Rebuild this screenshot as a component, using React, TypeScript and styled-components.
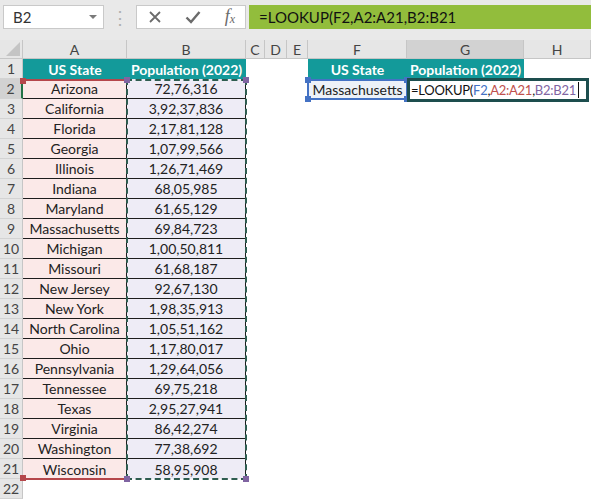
import React from "react";
import styled, { createGlobalStyle, css } from "styled-components";

const GlobalStyle = createGlobalStyle`
  * { box-sizing: border-box; }
  body {
    margin: 0;
    background: #ffffff;
    font-family: Lato, "Open Sans", sans-serif;
    overflow: hidden;
  }
`;

const states: [string, string][] = [
  ["Arizona", "72,76,316"],
  ["California", "3,92,37,836"],
  ["Florida", "2,17,81,128"],
  ["Georgia", "1,07,99,566"],
  ["Illinois", "1,26,71,469"],
  ["Indiana", "68,05,985"],
  ["Maryland", "61,65,129"],
  ["Massachusetts", "69,84,723"],
  ["Michigan", "1,00,50,811"],
  ["Missouri", "61,68,187"],
  ["New Jersey", "92,67,130"],
  ["New York", "1,98,35,913"],
  ["North Carolina", "1,05,51,162"],
  ["Ohio", "1,17,80,017"],
  ["Pennsylvania", "1,29,64,056"],
  ["Tennessee", "69,75,218"],
  ["Texas", "2,95,27,941"],
  ["Virginia", "86,42,274"],
  ["Washington", "77,38,692"],
  ["Wisconsin", "58,95,908"],
];

const columns = ["A", "B", "C", "D", "E", "F", "G", "H"];

export default function App() {
  return (
    <>
      <GlobalStyle />
      <Window>
        <Toolbar>
          <NameBox>
            <span>B2</span>
            <Caret />
          </NameBox>
          <Dots>⋮</Dots>
          <FormulaButtons>
            <svg width="14" height="14" viewBox="0 0 14 14">
              <path d="M2 2 L12 12 M12 2 L2 12" stroke="#6b6b6b" strokeWidth="1.8" />
            </svg>
            <svg width="16" height="14" viewBox="0 0 16 14">
              <path d="M1.5 7.5 L6 12 L14.5 2" stroke="#6b6b6b" strokeWidth="2.4" fill="none" />
            </svg>
            <Fx>
              f<sub>x</sub>
            </Fx>
          </FormulaButtons>
          <FormulaBar>=LOOKUP(F2,A2:A21,B2:B21</FormulaBar>
        </Toolbar>

        <Sheet>
          <Corner>
            <svg width="14" height="14" viewBox="0 0 14 14">
              <path d="M14 0 L14 14 L0 14 Z" fill="#c4c4c4" />
            </svg>
          </Corner>
          {columns.map((c) => (
            <ColHeader key={c} $active={c === "G"}>
              {c}
            </ColHeader>
          ))}

          <RowHeader>1</RowHeader>
          <TitleCell>US State</TitleCell>
          <TitleCell>Population (2022)</TitleCell>
          <Blank />
          <Blank />
          <Blank />
          <TitleCell>US State</TitleCell>
          <TitleCell>Population (2022)</TitleCell>
          <Blank />

          {states.map(([name, pop], i) => {
            const row = i + 2;
            return (
              <React.Fragment key={name}>
                <RowHeader $active={row === 2}>{row}</RowHeader>
                <DataCell $tone="state" $last={row === 21}>
                  {name}
                </DataCell>
                <DataCell $tone="pop" $last={row === 21}>
                  {pop}
                </DataCell>
                <Blank />
                <Blank />
                <Blank />
                {row === 2 ? (
                  <>
                    <LookupCell>Massachusetts</LookupCell>
                    <Blank />
                    <Blank />
                  </>
                ) : (
                  <>
                    <Blank />
                    <Blank />
                    <Blank />
                  </>
                )}
              </React.Fragment>
            );
          })}

          <RowHeader>22</RowHeader>
          {columns.map((c) => (
            <Blank key={c} />
          ))}

          {/* range highlights drawn over the grid */}
          <RedRange>
            <Handle $color="#b5474b" style={{ left: -3, top: -3 }} />
            <Handle $color="#b5474b" style={{ left: -3, bottom: -3 }} />
          </RedRange>
          <DashedRange>
            <Handle $color="#8064a2" style={{ left: -4, top: -4 }} />
            <Handle $color="#8064a2" style={{ right: -4, top: -4 }} />
            <Handle $color="#8064a2" style={{ left: -4, bottom: -4 }} />
            <Handle $color="#8064a2" style={{ right: -4, bottom: -4 }} />
          </DashedRange>
          <BlueRange>
            <Handle $color="#4472c4" style={{ left: -4, top: -4 }} />
            <Handle $color="#4472c4" style={{ right: -4, top: -4 }} />
            <Handle $color="#4472c4" style={{ left: -4, bottom: -4 }} />
            <Handle $color="#4472c4" style={{ right: -4, bottom: -4 }} />
          </BlueRange>
          <EditBox>
            =LOOKUP(<Ref $color="#4472c4">F2</Ref>,<Ref $color="#c0504d">A2:A21</Ref>,
            <Ref $color="#8064a2">B2:B21</Ref>
            <Cursor />
          </EditBox>
        </Sheet>
      </Window>
    </>
  );
}

const Window = styled.div`
  width: 591px;
  height: 499px;
  display: flex;
  flex-direction: column;
  background: #ffffff;
`;

const Toolbar = styled.div`
  height: 40px;
  background: #e9e9e9;
  display: flex;
  align-items: flex-start;
  padding: 5px 0 0 3px;
`;

const NameBox = styled.div`
  width: 101px;
  height: 24px;
  background: #ffffff;
  border: 1px solid #c9c9c9;
  display: flex;
  align-items: center;
  justify-content: space-between;
  padding: 0 6px 0 9px;
  font-size: 15px;
  color: #333;
`;

const Caret = styled.span`
  width: 0;
  height: 0;
  border-left: 4px solid transparent;
  border-right: 4px solid transparent;
  border-top: 4px solid #7a7a7a;
`;

const Dots = styled.div`
  width: 32px;
  text-align: center;
  color: #b0b0b0;
  font-size: 18px;
  line-height: 24px;
`;

const FormulaButtons = styled.div`
  width: 110px;
  height: 24px;
  background: #ffffff;
  border: 1px solid #c9c9c9;
  display: flex;
  align-items: center;
  justify-content: space-between;
  padding: 0 10px 0 11px;
`;

const Fx = styled.span`
  font-family: "Liberation Serif", serif;
  font-style: italic;
  font-size: 18px;
  line-height: 18px;
  color: #6b6b6b;
  sub {
    font-size: 12px;
    vertical-align: -1px;
  }
`;

const FormulaBar = styled.div`
  flex: 1;
  height: 24px;
  margin-left: 3px;
  background: #92bd3c;
  font-size: 15px;
  line-height: 24px;
  padding-left: 10px;
  color: #111;
`;

const Sheet = styled.div`
  position: relative;
  display: grid;
  grid-template-columns: 23px 104px 119px 19px 22px 21px 99px 117px 67px;
  grid-template-rows: 19px repeat(22, 20px);
  font-size: 14px;
  color: #222;
`;

const headerBase = css`
  background: #e6e6e6;
  color: #444;
  display: flex;
  align-items: center;
  justify-content: center;
  font-size: 14px;
`;

const Corner = styled.div`
  ${headerBase};
  justify-content: flex-end;
  align-items: flex-end;
  padding: 0 2px 2px 0;
  border-right: 1px solid #c6c6c6;
  border-bottom: 1px solid #c6c6c6;
`;

const ColHeader = styled.div<{ $active?: boolean }>`
  ${headerBase};
  background: ${(p) => (p.$active ? "#d2d2d2" : "#e6e6e6")};
  border-right: 1px solid #c6c6c6;
  border-bottom: 1px solid #c6c6c6;
`;

const RowHeader = styled.div<{ $active?: boolean }>`
  ${headerBase};
  background: ${(p) => (p.$active ? "#d2d2d2" : "#e6e6e6")};
  border-bottom: 1px solid #d3d3d3;
  border-right: ${(p) => (p.$active ? "2px solid #217346" : "1px solid #c6c6c6")};
`;

const Blank = styled.div`
  background: #ffffff;
`;

const TitleCell = styled.div`
  background: #139a9a;
  color: #ffffff;
  font-weight: 700;
  font-size: 14px;
  display: flex;
  align-items: center;
  justify-content: center;
  white-space: nowrap;
`;

const DataCell = styled.div<{ $tone: "state" | "pop"; $last?: boolean }>`
  background: ${(p) => (p.$tone === "state" ? "#fbe9e8" : "#eeecf6")};
  border-bottom: ${(p) => (p.$last ? "none" : "1px solid #1c1c1c")};
  border-right: 1px solid #1c1c1c;
  display: flex;
  align-items: center;
  justify-content: center;
  white-space: nowrap;
`;

const LookupCell = styled.div`
  background: #edf1f8;
  display: flex;
  align-items: center;
  justify-content: center;
  white-space: nowrap;
  font-size: 14px;
`;

const RedRange = styled.div`
  position: absolute;
  left: 23px;
  top: 39px;
  width: 104px;
  height: 401px;
  border-top: 2px solid #b5474b;
  border-bottom: 2px solid #b5474b;
  pointer-events: none;
`;

const DashedRange = styled.div`
  position: absolute;
  left: 126px;
  top: 39px;
  width: 121px;
  height: 401px;
  border: 2px dashed #2f5d50;
  pointer-events: none;
`;

const BlueRange = styled.div`
  position: absolute;
  left: 307px;
  top: 39px;
  width: 101px;
  height: 21px;
  border: 2px solid #4472c4;
  pointer-events: none;
`;

const Handle = styled.span<{ $color: string }>`
  position: absolute;
  width: 6px;
  height: 6px;
  background: ${(p) => p.$color};
`;

const EditBox = styled.div`
  position: absolute;
  left: 407px;
  top: 38px;
  width: 182px;
  height: 24px;
  border: 3px solid #1d4e4e;
  background: #ffffff;
  display: flex;
  align-items: center;
  padding-left: 1px;
  font-size: 13px;
  letter-spacing: -0.25px;
  color: #111;
  white-space: nowrap;
  overflow: hidden;
`;

const Ref = styled.span<{ $color: string }>`
  color: ${(p) => p.$color};
`;

const Cursor = styled.span`
  width: 1px;
  height: 16px;
  background: #111;
  margin-left: 2px;
`;
